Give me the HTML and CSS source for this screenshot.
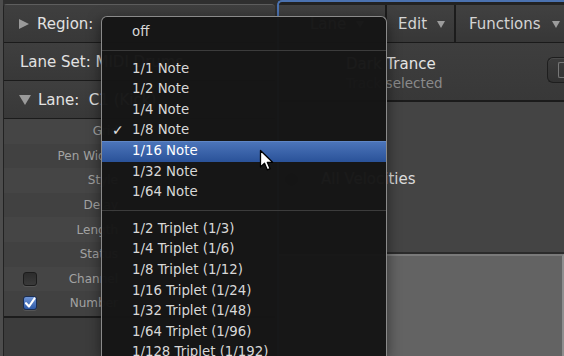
FILE: index.html
```html
<!DOCTYPE html>
<html>
<head>
<meta charset="utf-8">
<link rel="stylesheet" href="styles.css">
</head>
<body>
<div class="app">
  <div class="left">
    <div class="hdr"><span class="tri-r"></span>Region:</div>
    <div class="hdr plain">Lane Set: MIDI Drums</div>
    <div class="hdr"><span class="tri-d"></span>Lane:&nbsp;&nbsp;C1 (Kick)</div>
    <div class="insp">
      <div class="row"><span class="cb-slot"></span><span class="lbl">Grid</span></div>
      <div class="row alt"><span class="cb-slot"></span><span class="lbl">Pen Width</span></div>
      <div class="row"><span class="cb-slot"></span><span class="lbl">Style</span></div>
      <div class="row alt"><span class="cb-slot"></span><span class="lbl">Delay</span></div>
      <div class="row"><span class="cb-slot"></span><span class="lbl">Length</span></div>
      <div class="row alt"><span class="cb-slot"></span><span class="lbl">Status</span></div>
      <div class="row"><span class="cb-slot"><span class="cb"></span></span><span class="lbl">Channel</span></div>
      <div class="row alt"><span class="cb-slot"><span class="cb on"><svg viewBox="0 0 14 14" width="14" height="14"><path d="M3 7.2 L6 10.5 L11.5 2.5" fill="none" stroke="#fff" stroke-width="2.2" stroke-linecap="round" stroke-linejoin="round"/></svg></span></span><span class="lbl">Number</span></div>
    </div>
    <div class="left-foot"></div>
  </div>
  <div class="right">
    <div class="toolbar">
      <div class="tbtn lane">Lane<span class="dd"></span></div>
      <div class="tbtn edit">Edit<span class="dd"></span></div>
      <div class="tbtn func">Functions<span class="dd"></span></div>
    </div>
    <div class="info">
      <div class="info-text">
        <div class="title">Dark Trance</div>
        <div class="sub">Track selected</div>
      </div>
      <div class="side-btn"><span class="side-ico"></span></div>
    </div>
    <div class="mid">
      <div class="vel-row"><span class="dot"></span><span class="vel">All Velocities</span></div>
    </div>
    <div class="lower"></div>
  </div>
</div>

<div class="menu">
  <div class="item">off</div>
  <div class="sep"></div>
  <div class="item">1/1 Note</div>
  <div class="item">1/2 Note</div>
  <div class="item">1/4 Note</div>
  <div class="item checked"><span class="check">✓</span>1/8 Note</div>
  <div class="item hl">1/16 Note</div>
  <div class="item">1/32 Note</div>
  <div class="item">1/64 Note</div>
  <div class="sep"></div>
  <div class="item">1/2 Triplet (1/3)</div>
  <div class="item">1/4 Triplet (1/6)</div>
  <div class="item">1/8 Triplet (1/12)</div>
  <div class="item">1/16 Triplet (1/24)</div>
  <div class="item">1/32 Triplet (1/48)</div>
  <div class="item">1/64 Triplet (1/96)</div>
  <div class="item">1/128 Triplet (1/192)</div>
</div>

<svg class="cursor" width="16" height="24" viewBox="0 0 16 24">
  <path d="M1.5 1.5 L1.5 18 L5.5 14.3 L8.3 20.8 L11 19.6 L8.3 13.3 L13.6 13.3 Z" fill="#fff" stroke="#000" stroke-width="1.3" stroke-linejoin="round"/>
</svg>
</body>
</html>
```

FILE: styles.css
```css
* { box-sizing: border-box; }

body {
  margin: 0;
  width: 564px;
  height: 356px;
  overflow: hidden;
  position: relative;
  background: #2f2f2f;
  font-family: "DejaVu Sans", "Liberation Sans", sans-serif;
}

.app {
  display: flex;
  gap: 2px;
  height: 356px;
  border-left: 3px solid #4d4d4d;
}

/* ---------- left inspector ---------- */
.left {
  width: 272px;
  margin-top: 4px;
  border-top: 1px solid #5e5e5e;
  border-left: 1px solid #222;
  border-radius: 4px 4px 0 0;
  background: #3c3c3c;
  display: flex;
  flex-direction: column;
  overflow: hidden;
}

.hdr {
  height: 38px;
  flex: none;
  display: flex;
  align-items: center;
  padding-left: 15px;
  border-bottom: 1px solid #1b1b1b;
  background: linear-gradient(#3f3f3f, #383838);
  color: #e2e2e2;
  font-size: 15px;
  white-space: nowrap;
}

.hdr.plain { padding-left: 16px; }

.tri-r {
  width: 0;
  height: 0;
  margin-right: 8px;
  border-top: 5.5px solid transparent;
  border-bottom: 5.5px solid transparent;
  border-left: 10px solid #9a9a9a;
}

.tri-d {
  width: 0;
  height: 0;
  margin-right: 7px;
  border-left: 6px solid transparent;
  border-right: 6px solid transparent;
  border-top: 10px solid #9a9a9a;
}

.insp { flex: none; }

.row {
  height: 24.6px;
  display: flex;
  align-items: center;
  background: #454545;
}

.row.alt { background: #414141; }

.cb-slot {
  width: 14px;
  height: 14px;
  margin-left: 19px;
  flex: none;
}

.cb {
  display: block;
  width: 14px;
  height: 14px;
  border-radius: 3px;
  border: 1px solid #1c1c1c;
  background: linear-gradient(#2c2c2c, #3a3a3a);
  box-shadow: 0 1px 0 #555;
}

.cb.on {
  background: linear-gradient(#6f95d6, #2e5aa8);
  border-color: #1a2d52;
}

.cb.on svg { display: block; margin: -1px 0 0 -1px; }

.lbl {
  width: 81px;
  text-align: right;
  font-size: 12px;
  color: #a3a3a3;
  white-space: nowrap;
}

.left-foot {
  flex: 1;
  border-top: 2px solid #1c1c1c;
  background: #3c3c3c;
}

/* ---------- right panel ---------- */
.right {
  flex: 1;
  border-top: 2px solid #4b72b0;
  border-left: 2px solid #4b72b0;
  border-radius: 5px 0 0 0;
  background: #222;
  display: flex;
  flex-direction: column;
  overflow: hidden;
}

.toolbar {
  margin-top: 3px;
  height: 38px;
  flex: none;
  display: flex;
  border-bottom: 1px solid #1a1a1a;
}

.tbtn {
  display: flex;
  align-items: center;
  height: 37px;
  background: linear-gradient(#414141, #373737);
  color: #d4d4d4;
  font-size: 15px;
  border-right: 2px solid #1c1c1c;
  white-space: nowrap;
}

.tbtn.lane { width: 108px; padding-left: 31px; gap: 10px; }
.tbtn.edit { width: 69px; padding-left: 11px; gap: 10px; }
.tbtn.func { flex: 1; padding-left: 13px; gap: 11px; border-right: none; }

.dd {
  width: 0;
  height: 0;
  margin-top: 2px;
  border-left: 4.5px solid transparent;
  border-right: 4.5px solid transparent;
  border-top: 7px solid #9c9c9c;
}

.info {
  height: 59px;
  flex: none;
  display: flex;
  align-items: flex-start;
  border-bottom: 2px solid #1b1b1b;
  background: linear-gradient(#3e3e3e, #383838);
  padding-left: 67px;
}

.info-text { padding-top: 12px; }

.title {
  font-size: 15px;
  line-height: 18px;
  color: #e4e4e4;
}

.sub {
  font-size: 13.5px;
  line-height: 18px;
  margin-top: 1px;
  color: #8a8a8a;
  white-space: nowrap;
}

.side-btn {
  margin-left: auto;
  margin-top: 14px;
  width: 17px;
  height: 26px;
  border: 1px solid #1e1e1e;
  border-right: none;
  border-radius: 6px 0 0 6px;
  background: linear-gradient(#3c3c3c, #323232);
  box-shadow: inset 0 1px 0 #4a4a4a;
  display: flex;
  align-items: center;
  justify-content: flex-end;
}

.side-ico {
  width: 6px;
  height: 16px;
  border: 1px solid #777;
  border-right: none;
  border-radius: 2px 0 0 2px;
}

.mid {
  height: 152px;
  flex: none;
  border-bottom: 2px solid #2b2b2b;
  background: #444;
  padding-top: 67px;
  padding-left: 6px;
}

.vel-row {
  display: flex;
  align-items: center;
  height: 20px;
}

.dot {
  width: 13px;
  height: 13px;
  border-radius: 50%;
  background: #1e1e1e;
  border: 1px solid #111;
  margin-right: 23px;
}

.vel {
  font-size: 15px;
  color: #dcdcdc;
}

.lower {
  flex: 1;
  border-top: 2px solid #7a7a7a;
  border-right: 2px solid #8e8e8e;
  background: #636363;
}

/* ---------- popup menu ---------- */
.menu {
  position: absolute;
  left: 101px;
  top: 16px;
  width: 286px;
  height: 340px;
  padding-top: 5px;
  border: 1px solid #8a8a8a;
  border-bottom: none;
  border-radius: 6px 6px 0 0;
  background: rgba(22, 22, 22, 0.975);
  box-shadow: 0 4px 14px rgba(0, 0, 0, 0.5);
  font-size: 13.3px;
  color: #d8d8d8;
  overflow: hidden;
}

.item {
  position: relative;
  height: 20.6px;
  line-height: 20.6px;
  padding-left: 30px;
  white-space: nowrap;
}

.item.hl {
  color: #fff;
  background: linear-gradient(#4d76bb, #2a5299);
  box-shadow: inset 0 1px 0 #5f86c6;
}

.check {
  position: absolute;
  left: 10px;
  top: 0;
  font-size: 14px;
  color: #e0e0e0;
}

.sep {
  height: 16px;
  padding-top: 7px;
}

.sep::after {
  content: "";
  display: block;
  height: 1px;
  background: #3c3c3c;
}

.cursor {
  position: absolute;
  left: 259px;
  top: 149px;
}
```
